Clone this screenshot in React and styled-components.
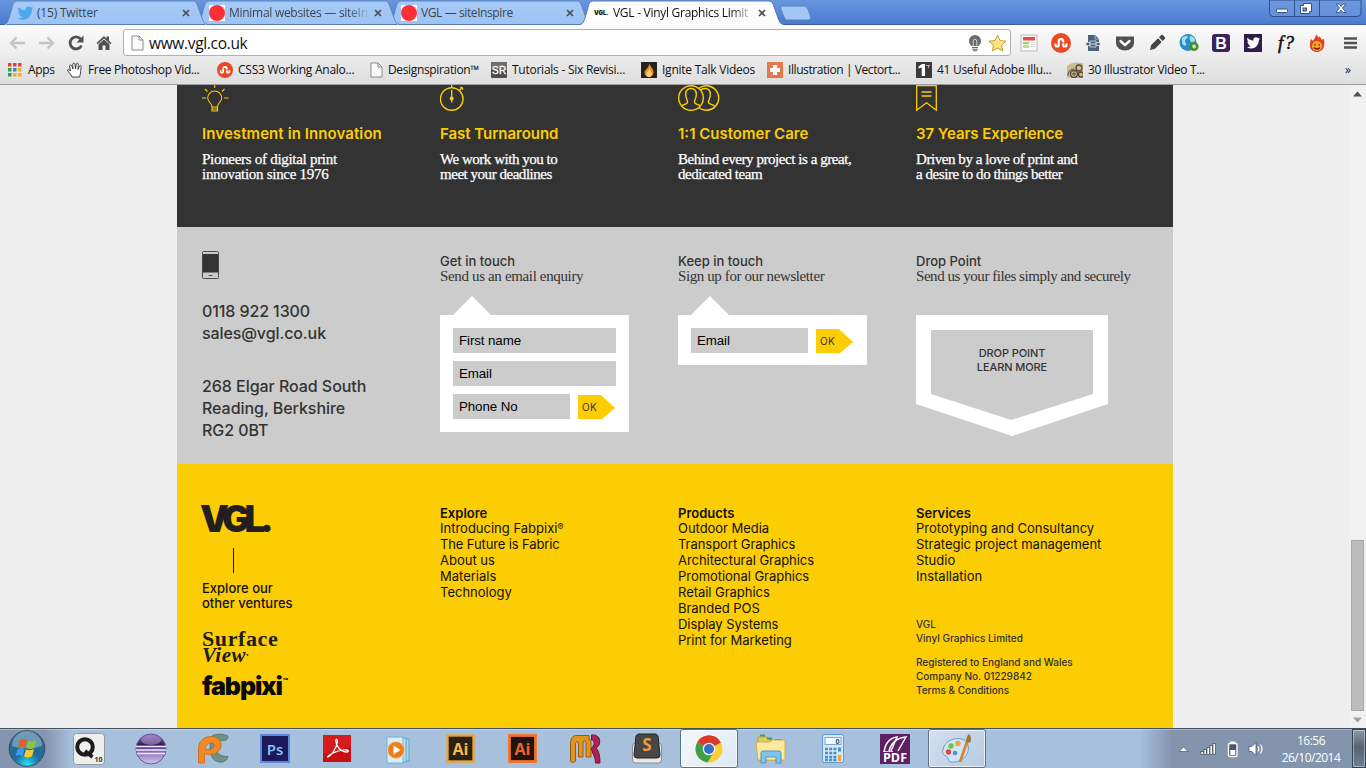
import React from "react";
import styled, { createGlobalStyle, css } from "styled-components";

const YELLOW = "#fccd03";
const INK = "#333333";
const SANS = `Inter, "Liberation Sans", sans-serif`;
const SERIF = `"Liberation Serif", serif`;
const UI = `"Open Sans", "Noto Sans", sans-serif`;

const GlobalStyle = createGlobalStyle`
  * { box-sizing: border-box; }
  body { margin: 0; overflow: hidden; }
  svg { display: block; flex: none; }
`;

const Screen = styled.div`
  width: 1366px;
  height: 768px;
  display: flex;
  flex-direction: column;
  overflow: hidden;
  font-family: ${UI};
`;

/* ---------- Browser window ---------- */

const TitleBar = styled.header`
  position: relative;
  height: 25px;
  flex: none;
  display: flex;
  justify-content: space-between;
  align-items: flex-start;
  background: linear-gradient(#6796df, #4b7bd0);
  border-bottom: 1px solid #3c5e9a;
`;

const TabStrip = styled.nav`
  display: flex;
  padding-left: 4px;
`;

const TabBox = styled.div`
  position: relative;
  z-index: ${(p) => p.$z};
  width: 204px;
  height: 25px;
  margin-right: -12px;
  padding: 5px 15px 0 13px;
  display: flex;
  align-items: flex-start;
`;

const TabBack = styled.svg`
  position: absolute;
  inset: 0;
`;

const TabIcon = styled.span`
  position: relative;
  width: 16px;
  height: 16px;
`;

const TabTitle = styled.span`
  position: relative;
  width: 138px;
  margin-left: 4px;
  white-space: nowrap;
  font-size: 12px;
  line-height: 16px;
  letter-spacing: ${(p) => p.$ls || 0}px;
  color: ${(p) => (p.$active ? "#111" : "#3c4450")};
  ${(p) =>
    p.$fade &&
    css`
      mask-image: linear-gradient(to right, #000 118px, transparent 142px);
    `}
`;

const TabClose = styled.svg`
  position: relative;
  margin: 4px 0 0 7px;
`;

const NewTab = styled.svg`
  margin: 5px 0 0 7px;
`;

const WindowButtons = styled.svg`
  margin-right: 4px;
`;

const Toolbar = styled.div`
  height: 33px;
  flex: none;
  display: flex;
  align-items: center;
  padding: 2px 0 0 8px;
  background: linear-gradient(#fbfbfb, #ebebeb);
`;

const NavIcons = styled.div`
  display: flex;
  flex: none;
  gap: 12px;
  width: 115px;
`;

const AddressBar = styled.div`
  width: 888px;
  height: 27px;
  flex: none;
  display: flex;
  align-items: center;
  padding: 0 3px 0 7px;
  background: #fff;
  border: 1px solid #b0b0b0;
  border-radius: 3px;
`;

const Url = styled.span`
  flex: 1;
  margin-left: 5px;
  font-size: 15.5px;
  line-height: 22px;
  letter-spacing: -0.33px;
  color: #111;
`;

const StarSlot = styled.span`
  margin-left: 6px;
`;

const Extensions = styled.div`
  display: flex;
  flex: none;
  gap: 12px;
  margin-left: 8px;
`;

const BookmarkBar = styled.div`
  height: 27px;
  flex: none;
  display: flex;
  align-items: center;
  padding: 0 0 3px 7px;
  background: linear-gradient(#eaeaea, #dedede);
  border-bottom: 1px solid #9d9d9d;
`;

const BookmarkItem = styled.div`
  width: ${(p) => p.$w}px;
  flex: none;
  display: flex;
  align-items: center;
  gap: 5px;
  white-space: nowrap;
  font-size: 12px;
  line-height: 16px;
  letter-spacing: ${(p) => p.$ls ?? -0.35}px;
  color: #111;
`;

/* ---------- Page ---------- */

const Viewport = styled.div`
  height: 643px;
  flex: none;
  display: flex;
  background: #eeeeee;
`;

const Page = styled.main`
  width: 996px;
  margin-left: 177px;
  display: flex;
  flex-direction: column;
`;

const Band = styled.section`
  display: grid;
  grid-template-columns: repeat(4, 238px);
  align-items: start;
  height: ${(p) => p.$h}px;
  padding: ${(p) => p.$top}px 0 0 25px;
  background: ${(p) => p.$bg};
  color: ${(p) => p.$color};
`;

const Column = styled.div`
  display: flex;
  flex-direction: column;
  align-items: flex-start;
  font-family: ${SANS};
`;

const FeatureTitle = styled.h3`
  margin: 12px 0 9px;
  font-size: 15px;
  font-weight: 600;
  line-height: 18px;
  letter-spacing: ${(p) => p.$ls || 0}px;
  color: ${YELLOW};
`;

const FeatureText = styled.p`
  margin: 0;
  font-family: ${SERIF};
  font-size: 15px;
  line-height: 15px;
  letter-spacing: ${(p) => p.$ls ?? -0.4}px;
  white-space: pre-line;
  -webkit-text-stroke: 0.25px currentColor;
`;

const ContactLines = styled.p`
  margin: ${(p) => p.$mt}px 0 0;
  font-size: 16px;
  font-weight: 500;
  line-height: 22px;
  letter-spacing: ${(p) => p.$ls || 0}px;
  white-space: pre-line;
`;

const TouchTitle = styled.h4`
  margin: 0;
  font-size: 13px;
  font-weight: 500;
  line-height: 15px;
`;

const TouchText = styled.p`
  margin: 0;
  font-family: ${SERIF};
  font-size: 15px;
  line-height: 15px;
  letter-spacing: ${(p) => p.$ls ?? -0.35}px;
  white-space: nowrap;
`;

const Pointer = styled.div`
  width: 38px;
  height: 19px;
  margin: 12px 0 0 13px;
  background: #fff;
  clip-path: polygon(50% 0, 100% 100%, 0 100%);
`;

const FormCard = styled.form`
  width: 189px;
  padding: 13px 13px ${(p) => p.$pb}px;
  display: flex;
  flex-direction: column;
  gap: 8px;
  background: #fff;
`;

const FormRow = styled.div`
  display: flex;
  gap: 8px;
`;

const Field = styled.div`
  width: ${(p) => (p.$short ? 117 : 163)}px;
  height: 25px;
  padding: 0 6px;
  background: #cccccc;
  color: #000;
  font: 13.33px/25px "Liberation Sans", sans-serif;
  letter-spacing: -0.1px;
`;

const OkButton = styled.div`
  width: 37px;
  height: 25px;
  margin-top: 1px;
  margin-bottom: -1px;
  padding-left: 4px;
  background: ${YELLOW};
  clip-path: polygon(0 0, 62% 0, 100% 52%, 62% 100%, 62% 96%, 0 96%);
  font-size: 10px;
  line-height: 25px;
  letter-spacing: 0.3px;
  color: ${INK};
`;

const DropOuter = styled.div`
  width: 192px;
  height: 121px;
  margin-top: 31px;
  padding: 15px;
  background: #fff;
  clip-path: polygon(0 0, 100% 0, 100% 89px, 50% 100%, 0 89px);
`;

const DropInner = styled.div`
  width: 162px;
  height: 90px;
  padding-top: 16px;
  background: #cccccc;
  clip-path: polygon(0 0, 100% 0, 100% 64px, 49.5% 100%, 0 64px);
  text-align: center;
  white-space: pre-line;
  font-size: 11px;
  font-weight: 500;
  line-height: 14px;
  letter-spacing: -0.1px;
`;

const VglLogo = styled.div`
  margin: 0 0 0 -2px;
  font-size: 36.5px;
  font-weight: 900;
  line-height: 28px;
  letter-spacing: -5.2px;
  color: #231f20;
`;

const Rule = styled.div`
  width: 1px;
  height: 25px;
  margin: 15px 0 8px 31px;
  background: #111;
`;

const Ventures = styled.p`
  margin: 0;
  font-size: 13px;
  font-weight: 500;
  line-height: 15px;
  white-space: pre-line;
`;

const SurfaceLogo = styled.div`
  margin-top: 20px;
  font-family: ${SERIF};
  font-size: 22px;
  font-weight: 700;
  line-height: 16px;
  letter-spacing: 0.6px;
  color: #1d1d1b;
`;

const ViewLogo = styled.div`
  font-family: ${SERIF};
  font-size: 21px;
  font-weight: 700;
  font-style: italic;
  line-height: 16px;
  letter-spacing: 0.5px;
  color: #1d1d1b;
  sup { font-size: 7px; vertical-align: 5px; line-height: 0; }
`;

const FabpixiLogo = styled.div`
  margin-top: 9px;
  font-size: 25px;
  font-weight: 900;
  line-height: 28px;
  letter-spacing: -1.05px;
  color: #0a0a0a;
  sup { font-size: 8px; letter-spacing: 0; vertical-align: 11px; line-height: 0; margin-left: 1px; }
`;

const LinkTitle = styled.h4`
  margin: 0 0 -1px;
  font-size: 13px;
  font-weight: 600;
  line-height: 15px;
`;

const LinkItem = styled.a`
  font-size: 13px;
  line-height: 16px;
  letter-spacing: ${(p) => p.$ls || 0}px;
  white-space: nowrap;
  sup { font-size: 9px; line-height: 0; vertical-align: 3px; }
`;

const Legal = styled.p`
  margin: ${(p) => p.$mt}px 0 0;
  font-size: 10px;
  font-weight: 500;
  line-height: 14px;
  white-space: pre-line;
  color: ${INK};
`;

const ScrollTrack = styled.div`
  width: 17px;
  margin-left: auto;
  display: flex;
  flex-direction: column;
  justify-content: space-between;
  align-items: center;
  padding: 6px 1px 5px 0;
  background: #f1f1f1;
`;

const ScrollThumb = styled.div`
  width: 13px;
  height: 171px;
  margin: auto 0 6px 1px;
  background: #bcbcbc;
  border: 1px solid #a8a8a8;
`;

/* ---------- Taskbar ---------- */

const TaskBar = styled.footer`
  height: 40px;
  flex: none;
  display: flex;
  background: linear-gradient(to right, #8496af 0, #8395ae 45px, #a7c0dc 72px, #a7c0dc 1140px, #8395ad 1172px, #8395ad 1366px);
  border-top: 1px solid #434f5d;
  box-shadow: inset 0 1px 0 rgba(255, 255, 255, 0.35);
`;

const StartSlot = styled.div`
  width: 60px;
  padding: 0 0 0 8px;
`;

const TaskIcons = styled.div`
  display: flex;
  gap: 4px;
`;

const TaskButton = styled.div`
  width: 58px;
  height: 39px;
  display: flex;
  align-items: center;
  justify-content: center;
  ${(p) =>
    p.$on &&
    css`
      background: linear-gradient(135deg, ${p.$on === "front" ? "#f4f8fc, #dde8f4" : "#d3e0ef, #b5cbe3"});
      border: 1px solid #5c6f86;
      border-radius: 3px;
      box-shadow: inset 0 0 0 1px rgba(255, 255, 255, 0.7);
    `}
`;

const Tray = styled.div`
  margin-left: auto;
  display: flex;
  align-items: center;
`;

const Clock = styled.div`
  width: 66px;
  margin: 0 8px 0 14px;
  text-align: center;
  font-size: 12px;
  line-height: 17px;
  letter-spacing: -0.5px;
  color: #fff;
`;

const ShowDesktop = styled.div`
  width: 14px;
  height: 39px;
  border: 1px solid #38424f;
  box-shadow: inset 0 0 0 1px rgba(255, 255, 255, 0.4);
  background: linear-gradient(#8c99aa, #566375 45%, #6c7e97);
`;

/* ---------- Icons ---------- */

const Svg = ({ w = 16, h = 16, children, ...rest }) => (
  <svg width={w} height={h} viewBox={`0 0 ${w} ${h}`} fill="none" {...rest}>
    {children}
  </svg>
);

const BIRD =
  "M0.8 13.2c1.8.2 3.500-.2 4.800-1.300-1.500-.1-2.600-1-3-2.200.5.1 1 .1 1.400 0C2.400 9.300 1.300 8 1.300 6.400c.5.200.9.400 1.400.4C1.200 5.700.7 3.800 1.700 2.200c1.700 2 4 3.200 6.700 3.400-.5-2 1-4 3.200-4 .9 0 1.800.4 2.400 1 .7-.1 1.400-.4 2-.8-.2.800-.7 1.400-1.400 1.800.6 0 1.200-.2 1.700-.5-.4.700-.9 1.200-1.500 1.700C15 10 11.500 14.700 6 14.700c-1.900 0-3.700-.5-5.200-1.500z";

const Bird = () => (
  <Svg><path d={BIRD} fill="#4da7ec" /></Svg>
);

const RedDot = () => (
  <Svg><rect width="16" height="16" fill="#fff" /><circle cx="8" cy="8" r="8" fill="#fb3034" /></Svg>
);

const VglFavicon = () => (
  <Svg>
    <rect width="16" height="16" fill="#fff" />
    <text x="1" y="10" fontFamily="Inter" fontWeight="900" fontSize="6.500" textLength="14.500" lengthAdjust="spacingAndGlyphs" fill="#111">VGL.</text>
  </Svg>
);

const PageIcon = () => (
  <svg width={13} height={16} viewBox="0 0 13 16" fill="none">
    <path d="M1 1h7l4 4v10H1z" fill="#fafafa" stroke="#8b8b8b" />
    <path d="M8 1v4h4" stroke="#8b8b8b" />
  </svg>
);

const Stumble = ({ s = 16 }) => (
  <svg width={s} height={s} viewBox="0 0 16 16" fill="none">
    <circle cx="8" cy="8" r="8" fill="#eb4924" />
    <path d="M3.600 8.300v1.200a1.300 1.300 0 002.600 0V6.700a1.800 1.800 0 013.600 0v.8M9.800 8.300v1.200a1.300 1.300 0 002.600 0V8.300" stroke="#fff" strokeWidth="1.700" />
  </svg>
);

const BackIcon = ({ flip }) => (
  <Svg w={18} h={16} transform={flip ? "scale(-1 1)" : undefined}>
    <path d="M17 8H3M8.500 2.500L3 8l5.500 5.500" stroke="#c3c3c3" strokeWidth="2.400" />
  </Svg>
);

const ReloadIcon = () => (
  <Svg w={16} h={16}>
    <path d="M13.500 10.500A6 6 0 1112.600 4" stroke="#505050" strokeWidth="2.800" />
    <path d="M15.500 0.500v7h-7z" fill="#505050" />
  </Svg>
);

const HomeIcon = () => (
  <Svg w={16} h={16}>
    <path d="M0.500 8L8 1l2.500 2.400V1.500h2.500v4.300L15.500 8l-1 1.200L8 3.500 1.500 9.200z" fill="#505050" />
    <path d="M2.500 9.200L8 4.500l5.500 4.700V15H9.500v-4.500h-3V15h-4z" fill="#505050" />
  </Svg>
);

const BulbSmall = () => (
  <Svg w={14} h={18}>
    <path d="M7 1a6 6 0 016 6c0 2.500-1.500 3.500-2.500 5h-7C2.500 10.500 1 9.500 1 7a6 6 0 016-6z" fill="#6a6a6a" />
    <path d="M5.200 12V7a1.800 1.800 0 013.600 0v5" stroke="#ccc" />
    <path d="M4 13.500h6M4 15.200h6M5 16.800h4" stroke="#6a6a6a" strokeWidth="1.100" />
  </Svg>
);

const Star = () => (
  <Svg w={19} h={18}>
    <path d="M9.500 1.200l2.500 5.400 6 .6-4.500 4 1.300 5.800-5.300-3-5.300 3 1.300-5.800-4.500-4 6-.6z" fill="#ffe27a" stroke="#c79a34" strokeLinejoin="round" />
    <path d="M9.500 4l1.500 3.500 3.500.5-3 2.500" stroke="#fff6c9" />
  </Svg>
);

const ext = [
  <Svg key="news" w={20} h={20}>
    <rect x="2" y="2" width="16" height="16" fill="#f8f8f8" stroke="#bdbdbd" />
    <rect x="4" y="4" width="12" height="3.500" fill="#e8474f" />
    <rect x="4" y="9" width="6" height="2" fill="#9ed36c" /><rect x="4" y="12" width="6" height="3" fill="#b9e08e" />
    <path d="M12 9.500h4M12 11.500h4M12 13.500h4" stroke="#ddd" />
  </Svg>,
  <Stumble key="su" s={20} />,
  <Svg key="zip" w={20} h={20}>
    <path d="M5 2h7l4 4v12H5z" fill="#4c6079" />
    <path d="M12 2v4h4" stroke="#a9b8cb" />
    <path d="M3 9.500h4v3H3zM13 9.500h4v3h-4zM7 8h6v6H7z" fill="#4c6079" stroke="#dbe2ea" strokeWidth=".8" />
    <path d="M8 11h4" stroke="#dbe2ea" />
  </Svg>,
  <Svg key="pocket" w={20} h={20}>
    <path d="M1 3.500h18V10a9 7.500 0 01-18 0z" fill="#505050" />
    <path d="M5.500 8l4.500 4.200L14.500 8" stroke="#fff" strokeWidth="2.400" strokeLinecap="round" strokeLinejoin="round" />
  </Svg>,
  <Svg key="pen" w={20} h={20}>
    <path d="M3 17l1.200-5L11 5.300l3.700 3.700L8 15.800zM12 4.300l2-2a1.500 1.500 0 012 0l1.700 1.700a1.500 1.500 0 010 2l-2 2z" fill="#454545" />
  </Svg>,
  <Svg key="globe" w={20} h={20}>
    <circle cx="9" cy="9.500" r="8.500" fill="#2d8cc9" />
    <path d="M3 5c3-3 6-2 6-1s-3 2-3 4 2 2 1 4-3 0-4-2zM11 3c3 0 5 2 5 4s-3 3-4 2-2-4-1-6z" fill="#9fdcf5" />
    <circle cx="15" cy="13.500" r="3.300" stroke="#4b8f2f" strokeWidth="2.600" fill="#cfe8c0" /><path d="M10 15l3-3 1 4z" fill="#3e8a2c" />
  </Svg>,
  <Svg key="boot" w={20} h={20}>
    <rect x="1" y="1" width="18" height="18" rx="3" fill="#3a2459" />
    <text x="10" y="16" textAnchor="middle" fontFamily="Liberation Sans" fontWeight="700" fontSize="16" fill="#fff">B</text>
  </Svg>,
  <Svg key="tw" w={20} h={20}>
    <rect x="1" y="1" width="18" height="18" fill="#2c1d4b" />
    <g transform="translate(3.200 3) scale(.85)"><path d={BIRD} fill="#fff" /></g>
  </Svg>,
  <Svg key="f" w={20} h={20} overflow="visible">
    <text x="3" y="15.500" fontFamily="Liberation Serif" fontStyle="italic" fontSize="19" fill="#111" stroke="#111" strokeWidth=".5" textLength="16">f?</text>
  </Svg>,
  <Svg key="fire" w={20} h={20}>
    <path d="M9 1c1 2 2 2 3 4 .5-1 0-2 0-2 2 1 2 3 3 4l1.500-1.500C18 9 17 11 17 13c-.5 3.500-3.500 6-7 6s-7-2.500-7-6c0-3 0-5 1-7l2 2c1-2 3-3.500 3-7z" fill="#e5401f" />
    <circle cx="10" cy="13" r="5" fill="#f9a52c" />
    <path d="M8 11v1.500M12 11v1.500M7 14.500c1.500 2 4.500 2 6 0" stroke="#5b2411" strokeWidth="1.300" />
  </Svg>,
  <Svg key="menu" w={20} h={20}>
    <path d="M5 5.500h13M5 10h13M5 14.500h13" stroke="#525252" strokeWidth="2.600" />
  </Svg>,
];

const AppsIcon = () => (
  <Svg w={16} h={14}>
    {["#e0433a", "#e0433a", "#e0433a", "#2f9e58", "#3c7fe0", "#f0b020", "#2f9e58", "#f0b020", "#f0b020"].map((c, i) => (
      <rect key={i} x={1 + (i % 3) * 5} y={Math.floor(i / 3) * 5} width="3.500" height="3.500" fill={c} />
    ))}
  </Svg>
);

const HandIcon = () => (
  <Svg>
    <path d="M5 15c-1-3-4-5-4.500-7 .5-1 2-.5 3 1L2.500 4c.5-1.500 2-1 2.300 0L6 7 5.800 2c.4-1.300 2-1.300 2.200 0l.5 5 .8-5c.5-1.200 2-1 2 .3L11 7.500l1.500-3.500c.6-1 2-.6 1.700.7C13.500 8 14 11 12.500 15z" fill="#fff" stroke="#333" strokeWidth=".9" />
  </Svg>
);

const SrIcon = () => (
  <Svg>
    <rect width="16" height="16" rx="1" fill="#4c4c4c" /><rect width="16" height="8" fill="#6d6d6d" />
    <text x="8" y="12" textAnchor="middle" fontFamily="Liberation Sans" fontSize="10" textLength="14" stroke="#fff" strokeWidth=".3" fill="#fff">SR</text>
  </Svg>
);

const FlameIcon = () => (
  <Svg>
    <rect width="16" height="16" fill="#26211c" />
    <path d="M8.500 1c.5 4 4 5 4 9.500C12.500 13 10.500 15 8 15s-4.500-2-4.500-4.500S8 6 8.500 1z" fill="#f08a28" />
    <path d="M8.500 6c0 3 2.200 3 2.200 5.500S9.500 15 8 15s-2.500-1-2.500-3S8 9 8.500 6z" fill="#ffd27a" />
  </Svg>
);

const PlusIcon = () => (
  <Svg><rect width="16" height="16" fill="#e2784b" /><path d="M8 3v10M3 8h10" stroke="#fff" strokeWidth="4.200" /></Svg>
);

const FirstIcon = () => (
  <Svg>
    <rect width="16" height="16" fill="#3b3b3b" />
    <path d="M2.500 4.500L6 2h3v12H5.700V5.500l-3.200 1z" fill="#fff" />
    <path d="M10 3.500h4M12.500 3v3" stroke="#aaa" />
  </Svg>
);

const SwirlIcon = () => (
  <Svg>
    <path d="M0 4C4 0 9 0 16 1v15H0z" fill="#cbbd93" />
    <circle cx="12" cy="6" r="3" stroke="#554731" strokeWidth="1.300" /><circle cx="7" cy="12" r="3.500" stroke="#554731" strokeWidth="1.400" />
    <circle cx="7" cy="12" r="1.200" stroke="#554731" /><circle cx="14" cy="12.500" r="2.500" stroke="#554731" strokeWidth="1.300" /><path d="M1 14c0-4 2-7 6-7" stroke="#554731" />
  </Svg>
);

const Feature = {
  bulb: (
    <Svg w={27} h={28} stroke={YELLOW} strokeWidth="1.100">
      <path d="M10 22c0-4-4.300-5-4.300-9a7 7 0 0114 0c0 4-4.300 5-4.300 9zM10 22v4h5.500v-4M10 24h5.500M12.700 0v3M3 4l2.500 2.500M22.500 4L20 6.500M0 13h4M22 13h4.500" />
    </Svg>
  ),
  watch: (
    <Svg w={27} h={28} stroke={YELLOW} strokeWidth="1.400">
      <circle cx="11.700" cy="14" r="11.300" /><path d="M11.700 0v2.500M11.700 5v12.500M19.500 5.200l3-3M20.500 1.700l2.500 2.800" /><circle cx="11.700" cy="13.500" r="1.300" fill={YELLOW} />
    </Svg>
  ),
  people: (
    <Svg w={42} h={28} stroke={YELLOW} strokeWidth="1.400">
      <circle cx="13" cy="13" r="12.300" />
      <path d="M3.500 21c2-2 5.500-1.500 6-3.500s-1.800-3.500-1.800-8 2.500-6 5.300-6 5.300 1.500 5.300 6-2.300 6-1.800 8 4 1.500 6 3.500" />
      <path d="M21 3.200A12.300 12.300 0 1121 22.800M22.500 5.500c1-1.500 2.800-2 4.500-2 2.800 0 5.300 1.500 5.300 6s-2.300 6-1.800 8 4 1.500 6 3.500" />
    </Svg>
  ),
  ribbon: (
    <Svg w={27} h={28} stroke={YELLOW} strokeWidth="1.300">
      <path d="M.7.6h19.600v24.600L10.500 17.800.7 25.200zM5.500 7h10M5.500 11h10" />
    </Svg>
  ),
};

const PhoneIcon = () => (
  <Svg w={17} h={28}>
    <rect x=".5" y=".5" width="16" height="27" rx="1" fill="#cccccc" stroke="#4a4a4a" />
    <rect x="1" y="3" width="15" height="18.500" fill="#333" /><path d="M6.500 24.500h4" stroke="#555" />
  </Svg>
);

const label = (text, x, y, size, fill, extra = {}) => (
  <text x={x} y={y} textAnchor="middle" fontFamily="Open Sans" fontWeight="700" fontSize={size} fill={fill} {...extra}>{text}</text>
);

const StartOrb = () => (
  <Svg w={38} h={39}>
    <defs>
      <radialGradient id="orb" cx=".5" cy=".95" r=".9"><stop offset="0" stopColor="#2be0fb" /><stop offset=".4" stopColor="#1a6d9c" /><stop offset="1" stopColor="#3c6a8b" /></radialGradient>
    </defs>
    <circle cx="19" cy="19.500" r="17.800" fill="url(#orb)" stroke="#2f4a64" />
    <path d="M4 17a15 15 0 0130 0c-9 3-21 3-30 0z" fill="#9fc3d8" opacity=".55" />
    <path d="M12 11c2.500-1.500 5-1.200 7 0l-2 7.500c-2-1.200-4.500-1.300-7 0z" fill="#ee5a24" />
    <path d="M20.500 11.800c2.500 1.200 5 1 8-.8l-2 7.700c-3 1.600-5.500 1.600-8 .4z" fill="#8cc63e" />
    <path d="M9.600 20c2.500-1.300 5-1.200 7 0l-2 7c-2-1.200-4.500-1.200-7 .2z" fill="#3a9be8" />
    <path d="M18 20.500c2.500 1.200 5 1 8-.5l-2 7.300c-3 1.500-5.500 1.500-8 .3z" fill="#fdc82f" />
  </Svg>
);

const tasks = [
  { icon: <Svg w={32} h={32}><rect x=".5" y=".5" width="31" height="31" rx="3" fill="#eeeeee" stroke="#999" /><circle cx="12" cy="14" r="7.800" stroke="#1c1c1c" strokeWidth="4" /><path d="M12 18l7.500 6" stroke="#1c1c1c" strokeWidth="3.600" />{label("10", 25.500, 29, 7, "#333")}</Svg> },
  { icon: <Svg w={32} h={32}>
      <defs><linearGradient id="ecl" x1="0" y1="0" x2="0" y2="1"><stop offset="0" stopColor="#8a68b8" /><stop offset=".35" stopColor="#34215e" /><stop offset=".6" stopColor="#8a72bb" /><stop offset="1" stopColor="#d6caec" /></linearGradient></defs>
      <circle cx="16" cy="16" r="15" fill="url(#ecl)" stroke="#6b579b" /><ellipse cx="16" cy="7" rx="10" ry="5" fill="#bda8dc" opacity=".5" />
      <path d="M1 13.500h30M1 17h30M2 20.500h28" stroke="#eee8f8" strokeWidth="1.300" /></Svg> },
  { icon: <Svg w={32} h={32}>
      <path d="M15 3C20 0 27 1 31 3c0 4-3 5-6 4.500-4 0-6 3-5.500 8 .5 6 5 8 11.500 8-1 6-8 7-13 4-4-3-5-8-5-13z" fill="#6f9187" stroke="#4e7268" strokeWidth=".8" />
      <path fillRule="evenodd" d="M1.500 30V16C1.500 8 7 3.500 14 3.500c6 0 10 3 10 8.500s-5 9.500-11 9.500c-2 0-4-.3-5.500-1v9.500zM8 16c3 1.500 9 .5 9.500-3.500S9 9 8 16z" fill="#f08a24" stroke="#c9660f" strokeWidth=".8" /></Svg> },
  { icon: <Svg w={30} h={30}><rect x="1" y="1" width="28" height="27" fill="#1d1a5b" stroke="#5f86dc" strokeWidth="2" />{label("Ps", 15, 20.500, 15, "#8fc4f7", { fontWeight: 600 })}</Svg> },
  { icon: <Svg w={30} h={30}><rect x="1" y="1" width="28" height="27" fill="#c80f12" /><path d="M1 1h28v12L1 20z" fill="#e02a26" opacity=".5" />
      <path d="M6 23c3-1 9-9 9.500-16 0-2-2-2-1.700 0 .5 6 5 11 11 11 2 0 2-2 0-2-6-.5-14 2.500-18 5.500-1.200 1-1.300 1.800-.8 1.500z" stroke="#fff" strokeWidth="1.300" /></Svg> },
  { icon: <Svg w={32} h={30}><rect x="12" y="5" width="14" height="22" fill="#a9d4ee" stroke="#5ea4cc" /><rect x="9" y="4" width="14" height="24" fill="#bfe0f4" stroke="#5ea4cc" /><rect x="4" y="3" width="16" height="26" fill="#d8edf9" stroke="#6fb1d6" />
      <circle cx="13" cy="16" r="8.500" fill="#f07d1c" stroke="#fbd1a2" /><path d="M10.500 11.500l7 4.500-7 4.500z" fill="#fff" /></Svg> },
  { icon: <Svg w={30} h={30}><rect x="1.500" y="1.500" width="26" height="26" fill="#2b210f" stroke="#e8a33a" strokeWidth="2.400" />{label("Ai", 14.500, 20.500, 16, "#fbb64a")}</Svg> },
  { icon: <Svg w={30} h={30}><rect x="1.500" y="1.500" width="26" height="26" fill="#221510" stroke="#f4702a" strokeWidth="2.800" />{label("Ai", 14.500, 20.500, 16, "#f4632a")}</Svg> },
  { icon: <Svg w={32} h={32}>
      <path d="M1.500 28V11C1.500 5 4 2 8 2.500h12v4c2 0 2 1 2 3V24h-5V10c0-3-3-3-3 0v14H9.500V11c0-3-3-3-3 0v17c-1.500 2-4 2-5 0z" fill="#e2941c" stroke="#8d5210" strokeWidth=".9" />
      <path d="M22.500 2c6-.5 9 3 8 8-.5 3-2 4-3.500 5 2 2 4 6 4 15h-4.500c0-7-3.500-9-4-15 3-2 4-8 0-8z" fill="#b3214f" stroke="#6f1233" /></Svg> },
  { icon: <Svg w={32} h={32}><rect x="1.500" y="10" width="29" height="20" rx="3" fill="#e8e8e8" stroke="#8b8b8b" /><path d="M5 3q1-2 3-2h16q2 0 3 2l2 19q0 3-3 3H6q-3 0-3-3z" fill="#474747" stroke="#222" />{label("S", 16, 17.500, 17, "#f29a3a")}</Svg> },
  { on: "front", icon: <Svg w={28} h={28}><circle cx="14" cy="14" r="13.500" fill="#f9cf32" /><path d="M14 14L2.300 7.200A13.500 13.500 0 0125.800 7.500z" fill="#db3b2e" /><path d="M14 14L2.300 7.200A13.500 13.500 0 0012.500 27.400L19 17z" fill="#3f9f46" /><path d="M2.300 7.200A13.500 13.500 0 0125.800 7.500H14z" fill="#db3b2e" /><circle cx="14" cy="14" r="6.300" fill="#f5f5f5" /><circle cx="14" cy="14" r="5" fill="#3272c4" /></Svg> },
  { icon: <Svg w={32} h={32}><path d="M3 4h9l2 3h14v20H3z" fill="#e9c95c" stroke="#bf9c3b" /><path d="M5 2.500h5M12 5.500h5M20 7h6" stroke="#3da35a" strokeWidth="2" /><path d="M1 9h14l2-2h13v20H3z" fill="#fbe9a0" stroke="#cfae4c" />
      <path d="M6 30V20q0-2 2-2h16q2 0 2 2v10h-5v-6H11v6z" fill="#7fc4ea" stroke="#4c96c4" /></Svg> },
  { icon: <Svg w={24} h={32}><rect x="1.500" y="1.500" width="21" height="28" rx="2" fill="#d3e8f8" stroke="#5d9bce" /><rect x="4" y="4.500" width="16" height="7" fill="#f6fbff" stroke="#76aad4" />{label("0", 16.500, 11, 7, "#345")}
      <path d="M4 16h12M4 20h12M4 24h12M4 27h12" stroke="#4c8dc6" strokeWidth="2.400" strokeDasharray="3 1.200" /><path d="M18.500 14.500v4" stroke="#4c8dc6" strokeWidth="3" /><path d="M18.500 22v6" stroke="#f0a030" strokeWidth="3" /></Svg> },
  { icon: <Svg w={32} h={32}><rect x="1" y="1" width="30" height="30" fill="#5e1f63" /><path d="M5 22c0-9 4-17 13-18l-6 14M10 18C12 10 17 5 27 4L19 18M4 19h10" stroke="#fff" strokeWidth="1.500" /><path d="M3 19h26v11H3z" fill="#5e1f63" />{label("PDF", 16, 28.500, 12.500, "#fff", { textLength: 24 })}</Svg> },
  { on: "back", icon: <Svg w={34} h={32}><path d="M3 16C5 8 14 4 22 6c6 2 8 8 5 15-3 6-11 9-16 8-4-1-2-5-5-6s-4-3-3-7z" fill="#cfe5f7" stroke="#6f9cc4" />
      <circle cx="11" cy="13" r="2.700" fill="#7cc242" /><circle cx="18" cy="10.500" r="2.700" fill="#eda63a" /><circle cx="8.500" cy="19" r="2.700" fill="#d9473f" /><circle cx="15" cy="20" r="2.300" fill="#4f92cb" />
      <path d="M20 29L27 9" stroke="#d88432" strokeWidth="2.800" /><path d="M26 9c0-4 1-6 3-8 2 2 3 5 1 9z" fill="#a5743c" /></Svg> },
];

const TrayIcons = () => (
  <Svg w={90} h={20}>
    <path d="M5 12.500L9.500 8l4.500 4.500z" fill="#fff" stroke="#4a5668" strokeWidth=".7" />
    {[3, 5, 7, 9, 11].map((h, i) => (
      <rect key={h} x={27 + i * 3} y={15.500 - h} width="2.500" height={h} fill="#fff" stroke="#3c4859" strokeWidth=".7" />
    ))}
    <rect x="54.500" y="4.500" width="8.500" height="13" rx="1.500" fill="#4b5868" stroke="#fff" strokeWidth="1.400" /><rect x="56" y="2.500" width="5.500" height="2" fill="#fff" /><rect x="56.300" y="11" width="5" height="5" fill="#fff" />
    <path d="M75 7.500h3l4-4v13l-4-4h-3z" fill="#fff" stroke="#3c4859" strokeWidth=".7" /><path d="M84 7.500q1.500 2.500 0 5M86.500 5.500q3 4.500 0 9" stroke="#fff" strokeWidth="1.200" />
  </Svg>
);

/* ---------- Composition ---------- */

function Tab({ icon, title, active, fade, z, ls }) {
  return (
    <TabBox $z={z}>
      <TabBack width="204" height="25">
        <defs>
          <linearGradient id="tabIdle" x1="0" y1="0" x2="0" y2="1"><stop offset="0" stopColor="#a6caf6" /><stop offset="1" stopColor="#9dc3f3" /></linearGradient>
        </defs>
        <path d="M0 25C3 24 4 21 5 18L9 4Q10 1 13 1H189Q192 1 193 4L198 18C199 21 200 24 204 25Z" fill={active ? "#fcfcfc" : "url(#tabIdle)"} />
        <path d="M0 24.500C3 24 4 21 5 18L9 4Q10 1 13 1H189Q192 1 193 4L198 18C199 21 200 24 204 24.500" fill="none" stroke={active ? "#5577ad" : "#5c80b8"} strokeWidth=".9" />
        {active ? null : <path d="M3 24.500H201" stroke="#5a7cb2" />}
      </TabBack>
      <TabIcon>{icon}</TabIcon>
      <TabTitle $active={active} $fade={fade} $ls={ls}>{title}</TabTitle>
      <TabClose width="8" height="8" viewBox="0 0 8 8"><path d="M1 1l6 6M7 1L1 7" stroke="#474c55" strokeWidth="1.700" /></TabClose>
    </TabBox>
  );
}

const bookmarks = [
  { icon: <AppsIcon />, text: "Apps", w: 60, ls: -0.3 },
  { icon: <HandIcon />, text: "Free Photoshop Vid...", w: 150 },
  { icon: <Stumble />, text: "CSS3 Working Analo...", w: 153, ls: -0.25 },
  { icon: <PageIcon />, text: "Designspiration™", w: 121 },
  { icon: <SrIcon />, text: "Tutorials - Six Revisi...", w: 150, ls: -0.25 },
  { icon: <FlameIcon />, text: "Ignite Talk Videos", w: 126, ls: -0.24 },
  { icon: <PlusIcon />, text: "Illustration | Vectort...", w: 149, ls: -0.42 },
  { icon: <FirstIcon />, text: "41 Useful Adobe Illu...", w: 151, ls: -0.3 },
  { icon: <SwirlIcon />, text: "30 Illustrator Video T...", w: 278, ls: -0.35 },
];

const features = [
  { icon: "bulb", title: "Investment in Innovation", text: "Pioneers of digital print\ninnovation since 1976", ls: 0.09, tls: -0.29 },
  { icon: "watch", title: "Fast Turnaround", text: "We work with you to\nmeet your deadlines", ls: -0.03, tls: -0.47 },
  { icon: "people", title: "1:1 Customer Care", text: "Behind every project is a great,\ndedicated team", tls: -0.44 },
  { icon: "ribbon", title: "37 Years Experience", text: "Driven by a love of print and\na desire to do things better", ls: -0.06, tls: -0.44 },
];

const products = ["Outdoor Media", "Transport Graphics", "Architectural Graphics", "Promotional Graphics", "Retail Graphics", "Branded POS", "Display Systems", "Print for Marketing"];
const services = ["Prototyping and Consultancy", "Strategic project management", "Studio", "Installation"];

const PaddedColumn = styled(Column)`
  padding-top: ${(p) => p.$pt}px;
`;

function TouchColumn({ title, text, ls, children }) {
  return (
    <PaddedColumn $pt={3}>
      <TouchTitle>{title}</TouchTitle>
      <TouchText $ls={ls}>{text}</TouchText>
      {children}
    </PaddedColumn>
  );
}

function LinkColumn({ title, children }) {
  return (
    <PaddedColumn $pt={1}>
      <LinkTitle>{title}</LinkTitle>
      {children}
    </PaddedColumn>
  );
}

export default function App() {
  return (
    <Screen>
      <GlobalStyle />
      <TitleBar>
        <TabStrip>
          <Tab z={4} icon={<Bird />} title="(15) Twitter" ls={-0.2} />
          <Tab z={3} icon={<RedDot />} title="Minimal websites — siteIn" ls={-0.28} fade />
          <Tab z={2} icon={<RedDot />} title="VGL — siteInspire" ls={-0.4} />
          <Tab z={5} icon={<VglFavicon />} title="VGL - Vinyl Graphics Limit" ls={-0.28} active fade />
          <NewTab width="33" height="17"><path d="M3 1h22q3 0 4 3l3 9q0 2-3 2H8q-2 0-3-3L1.500 3q0-2 1.500-2z" fill="#a3c7f5" stroke="#5a80ba" /></NewTab>
        </TabStrip>
        <WindowButtons width="93" height="18" viewBox="0 0 93 18">
          <path d="M.5 0v13q0 3.500 3.500 3.500h84q4 0 4-3.500V0z" fill="#6f9ade" fillOpacity=".6" stroke="#2d4f8e" />
          <path d="M25.500 0v16M50.500 0v16" stroke="#2d4f8e" />
          <rect x="7.500" y="9" width="11" height="3.500" rx="1" fill="#fff" stroke="#33507f" />
          <path d="M34.500 3.500h8v8h-2v2h-9v-8h3z" fill="#fff" stroke="#33507f" /><rect x="34" y="8" width="3.500" height="3" fill="#6f9ade" stroke="#33507f" />
          <path d="M67 4l3 0 2 2.500L74 4l3 0-3.500 4L77 12.500h-3L72 10l-2 2.500h-3L70.500 8z" fill="#fff" stroke="#33507f" strokeWidth=".9" />
        </WindowButtons>
      </TitleBar>
      <Toolbar>
        <NavIcons><BackIcon /><BackIcon flip /><ReloadIcon /><HomeIcon /></NavIcons>
        <AddressBar>
          <PageIcon />
          <Url>www.vgl.co.uk</Url>
          <BulbSmall />
          <StarSlot><Star /></StarSlot>
        </AddressBar>
        <Extensions>{ext}</Extensions>
      </Toolbar>
      <BookmarkBar>
        {bookmarks.map((b) => (
          <BookmarkItem key={b.text} $w={b.w} $ls={b.ls}>{b.icon}<span>{b.text}</span></BookmarkItem>
        ))}
        <BookmarkItem $w={12}>»</BookmarkItem>
      </BookmarkBar>

      <Viewport>
        <Page>
          <Band $h={142} $top={0} $bg="#333333" $color="#fff">
            {features.map((f) => (
              <Column key={f.title}>
                {Feature[f.icon]}
                <FeatureTitle $ls={f.ls}>{f.title}</FeatureTitle>
                <FeatureText $ls={f.tls}>{f.text}</FeatureText>
              </Column>
            ))}
          </Band>
          <Band $h={237} $top={24} $bg="#cccccc" $color={INK}>
            <Column>
              <PhoneIcon />
              <ContactLines $mt={21} $ls={-0.1}>{"0118 922 1300\nsales@vgl.co.uk"}</ContactLines>
              <ContactLines $mt={31} $ls={-0.05}>{"268 Elgar Road South\nReading, Berkshire\nRG2 0BT"}</ContactLines>
            </Column>
            <TouchColumn title="Get in touch" text="Send us an email enquiry">
              <Pointer />
              <FormCard $pb={13}>
                <Field>First name</Field>
                <Field>Email</Field>
                <FormRow><Field $short>Phone No</Field><OkButton>OK</OkButton></FormRow>
              </FormCard>
            </TouchColumn>
            <TouchColumn title="Keep in touch" text="Sign up for our newsletter" ls={-0.4}>
              <Pointer />
              <FormCard $pb={12}>
                <FormRow><Field $short>Email</Field><OkButton>OK</OkButton></FormRow>
              </FormCard>
            </TouchColumn>
            <TouchColumn title="Drop Point" text="Send us your files simply and securely" ls={-0.45}>
              <DropOuter><DropInner>{"DROP POINT\nLEARN MORE"}</DropInner></DropOuter>
            </TouchColumn>
          </Band>
          <Band $h={264} $top={41} $bg={YELLOW} $color="#111">
            <Column>
              <VglLogo>VGL.</VglLogo>
              <Rule />
              <Ventures>{"Explore our\nother ventures"}</Ventures>
              <SurfaceLogo>Surface</SurfaceLogo>
              <ViewLogo>View<sup>•</sup></ViewLogo>
              <FabpixiLogo>fabpixi<sup>™</sup></FabpixiLogo>
            </Column>
            <LinkColumn title="Explore">
              <LinkItem>Introducing Fabpixi<sup>®</sup></LinkItem>
              <LinkItem $ls={-0.12}>The Future is Fabric</LinkItem>
              {["About us", "Materials", "Technology"].map((t) => <LinkItem key={t}>{t}</LinkItem>)}
            </LinkColumn>
            <LinkColumn title="Products">
              {products.map((t) => <LinkItem key={t} $ls={-0.04}>{t}</LinkItem>)}
            </LinkColumn>
            <LinkColumn title="Services">
              {services.map((t) => <LinkItem key={t}>{t}</LinkItem>)}
              <Legal $mt={33}>{"VGL\nVinyl Graphics Limited"}</Legal>
              <Legal $mt={10}>{"Registered to England and Wales\nCompany No. 01229842\nTerms & Conditions"}</Legal>
            </LinkColumn>
          </Band>
        </Page>
        <ScrollTrack>
          <Svg w={9} h={6}><path d="M0 5.500L4.500 .5l4.500 5z" fill="#505050" /></Svg>
          <ScrollThumb />
          <Svg w={9} h={6}><path d="M0 .5h9L4.500 5.500z" fill="#a0a0a0" /></Svg>
        </ScrollTrack>
      </Viewport>

      <TaskBar>
        <StartSlot><StartOrb /></StartSlot>
        <TaskIcons>
          {tasks.map((t, i) => <TaskButton key={i} $on={t.on}>{t.icon}</TaskButton>)}
        </TaskIcons>
        <Tray>
          <TrayIcons />
          <Clock>16:56<br />26/10/2014</Clock>
          <ShowDesktop />
        </Tray>
      </TaskBar>
    </Screen>
  );
}
